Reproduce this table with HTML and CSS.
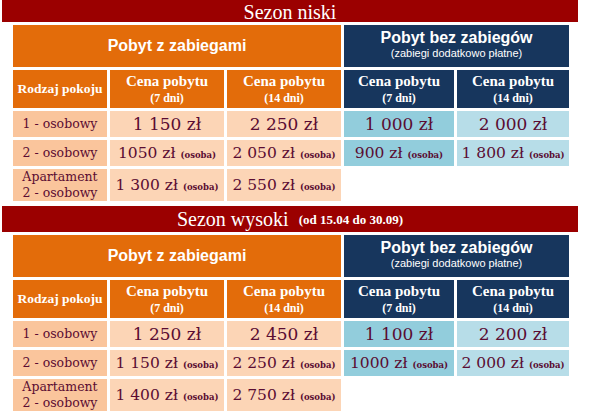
FILE: index.html
```html
<!DOCTYPE html>
<html lang="pl">
<head>
<meta charset="utf-8">
<title>Cennik</title>
<link rel="stylesheet" href="styles.css">
</head>
<body>
<div class="page">
  <div class="season season-first"><span class="season-title">Sezon niski</span></div>
  <table class="prices">
    <colgroup><col class="c-type"><col class="c-p7"><col class="c-p14"><col class="c-b7"><col class="c-b14"></colgroup>
    <tr class="r-h1">
      <th colspan="3" class="hd-orange group">Pobyt z zabiegami</th>
      <th colspan="2" class="hd-blue group">Pobyt bez zabiegów<span class="sub">(zabiegi dodatkowo płatne)</span></th>
    </tr>
    <tr class="r-h2">
      <th class="hd-orange type-h">Rodzaj pokoju</th>
      <th class="hd-orange price-h">Cena pobytu<span class="days">(7 dni)</span></th>
      <th class="hd-orange price-h">Cena pobytu<span class="days">(14 dni)</span></th>
      <th class="hd-blue price-h">Cena pobytu<span class="days">(7 dni)</span></th>
      <th class="hd-blue price-h">Cena pobytu<span class="days">(14 dni)</span></th>
    </tr>
    <tr class="r1">
      <td class="type">1 - osobowy</td>
      <td class="peach big">1 150 zł</td>
      <td class="peach big">2 250 zł</td>
      <td class="teal big">1 000 zł</td>
      <td class="lteal big">2 000 zł</td>
    </tr>
    <tr class="r2">
      <td class="type">2 - osobowy</td>
      <td class="peach">1050 zł <span class="per">(osoba)</span></td>
      <td class="peach">2 050 zł <span class="per">(osoba)</span></td>
      <td class="teal">900 zł <span class="per">(osoba)</span></td>
      <td class="lteal">1 800 zł <span class="per">(osoba)</span></td>
    </tr>
    <tr class="r3">
      <td class="type">Apartament<br>2 - osobowy</td>
      <td class="peach">1 300 zł <span class="per">(osoba)</span></td>
      <td class="peach">2 550 zł <span class="per">(osoba)</span></td>
      <td class="blank"></td>
      <td class="blank"></td>
    </tr>
  </table>

  <div class="season season-second"><span class="season-title">Sezon wysoki</span><span class="season-dates">(od 15.04 do 30.09)</span></div>
  <table class="prices">
    <colgroup><col class="c-type"><col class="c-p7"><col class="c-p14"><col class="c-b7"><col class="c-b14"></colgroup>
    <tr class="r-h1">
      <th colspan="3" class="hd-orange group">Pobyt z zabiegami</th>
      <th colspan="2" class="hd-blue group">Pobyt bez zabiegów<span class="sub">(zabiegi dodatkowo płatne)</span></th>
    </tr>
    <tr class="r-h2">
      <th class="hd-orange type-h">Rodzaj pokoju</th>
      <th class="hd-orange price-h">Cena pobytu<span class="days">(7 dni)</span></th>
      <th class="hd-orange price-h">Cena pobytu<span class="days">(14 dni)</span></th>
      <th class="hd-blue price-h">Cena pobytu<span class="days">(7 dni)</span></th>
      <th class="hd-blue price-h">Cena pobytu<span class="days">(14 dni)</span></th>
    </tr>
    <tr class="r1">
      <td class="type">1 - osobowy</td>
      <td class="peach big">1 250 zł</td>
      <td class="peach big">2 450 zł</td>
      <td class="teal big">1 100 zł</td>
      <td class="lteal big">2 200 zł</td>
    </tr>
    <tr class="r2">
      <td class="type">2 - osobowy</td>
      <td class="peach">1 150 zł <span class="per">(osoba)</span></td>
      <td class="peach">2 250 zł <span class="per">(osoba)</span></td>
      <td class="teal">1000 zł <span class="per">(osoba)</span></td>
      <td class="lteal">2 000 zł <span class="per">(osoba)</span></td>
    </tr>
    <tr class="r3">
      <td class="type">Apartament<br>2 - osobowy</td>
      <td class="peach">1 400 zł <span class="per">(osoba)</span></td>
      <td class="peach">2 750 zł <span class="per">(osoba)</span></td>
      <td class="blank"></td>
      <td class="blank"></td>
    </tr>
  </table>
  <p class="note">W cenę pobytu wliczone są: zakwaterowanie</p>
</div>
</body>
</html>
```
FILE: styles.css
```css
html, body {
  margin: 0;
  padding: 0;
  background: #ffffff;
}
.page {
  width: 591px;
  height: 419px;
  overflow: hidden;
}
.season {
  margin-left: 2px;
  width: 576px;
  background: #9b0000;
  color: #ffffff;
  font-family: "Liberation Serif", serif;
  display: flex;
  justify-content: center;
  align-items: center;
  gap: 10px;
}
.season-first {
  height: 22px;
}
.season-second {
  height: 26px;
  margin-top: 2px;
}
.season-title {
  font-size: 20px;
  line-height: 1;
}
.season-first .season-title {
  padding-top: 1px;
}
.season-dates {
  font-size: 13px;
  font-weight: bold;
  padding-top: 2px;
}
.prices {
  margin-left: 10px;
  border-collapse: separate;
  border-spacing: 3px;
  table-layout: fixed;
  width: 562px;
}
.c-type { width: 94px; }
.c-p7 { width: 114px; }
.c-p14 { width: 114px; }
.c-b7 { width: 110px; }
.c-b14 { width: 112px; }
.prices th,
.prices td {
  padding: 0;
  text-align: center;
  vertical-align: middle;
  white-space: nowrap;
  overflow: hidden;
}
.r-h1 th { height: 38px; }
.r-h2 th { height: 38px; }
.r1 td { height: 26px; }
.r2 td { height: 26px; }
.r3 td { height: 32px; }
.hd-orange {
  background: #e36c0a;
  color: #ffffff;
}
.hd-blue {
  background: #17365d;
  color: #ffffff;
}
.group {
  font-family: "Liberation Sans", Arial, sans-serif;
  font-weight: bold;
  font-size: 16px;
  line-height: 18px;
}
.hd-blue.group {
  vertical-align: top;
  padding-top: 4px;
}
.sub {
  display: block;
  font-size: 11px;
  font-weight: normal;
  line-height: 13px;
}
.type-h {
  font-family: "Liberation Serif", serif;
  font-weight: bold;
  font-size: 13.5px;
}
.price-h {
  font-family: "Liberation Serif", serif;
  font-weight: bold;
  font-size: 15px;
  line-height: 18px;
  vertical-align: top;
  padding-top: 2px;
}
.days {
  display: block;
  font-size: 12px;
  line-height: 16px;
}
.prices td {
  font-family: "DejaVu Serif", serif;
  color: #5a0c32;
  font-size: 15.5px;
}
.prices td.big {
  font-size: 17px;
}
.type {
  background: #fac59c;
  font-size: 12.5px !important;
  line-height: 16px;
}
.peach { background: #fcd5b6; }
.teal { background: #92cddc; }
.lteal { background: #b7dde8; }
.blank { background: transparent; }
.per {
  font-size: 8.5px;
  font-weight: bold;
}
.note {
  margin: 3px 0 0 118px;
  font-family: "Liberation Serif", serif;
  font-weight: bold;
  font-size: 22px;
  line-height: 24px;
  color: #9b0000;
  white-space: nowrap;
}
```
